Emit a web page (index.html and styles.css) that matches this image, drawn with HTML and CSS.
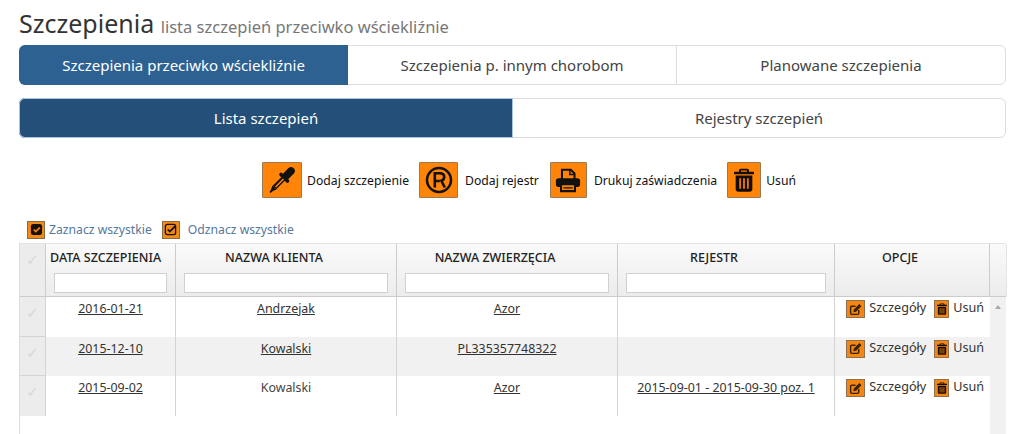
FILE: index.html
```html
<!DOCTYPE html>
<html lang="pl">
<head>
<meta charset="utf-8">
<title>Szczepienia</title>
<link rel="stylesheet" href="styles.css">
</head>
<body>
<svg class="defs" width="0" height="0" aria-hidden="true">
  <symbol id="i-trash" viewBox="0 0 24 28">
    <path d="M8 .5h8c1 0 2 1 2 2V4h5c.6 0 1 .4 1 1v2H0V5c0-.6.4-1 1-1h5V2.500c0-1 1-2 2-2zM8.500 2.500V4h7V2.500zM2 8.500h20V25c0 1.700-1.300 3-3 3H5c-1.700 0-3-1.300-3-3zM6.400 12v12.500h1.900V12zM11 12v12.500h2V12zM15.700 12v12.500h1.900V12z" fill="#160c00" fill-rule="evenodd"/>
  </symbol>
  <symbol id="i-edit" viewBox="0 0 24 24">
    <path d="M18 13v6a2 2 0 0 1-2 2H5a2 2 0 0 1-2-2V8a2 2 0 0 1 2-2h7" fill="none" stroke="#3a2208" stroke-width="2.600"/>
    <path d="M9 12 19 2l4 4-10 10-5 1z" fill="#3a2208"/>
  </symbol>
</svg>
<main class="page">
  <h1 class="title">Szczepienia <small>lista szczepień przeciwko wściekliźnie</small></h1>

  <nav class="tabs tabs-main">
    <a class="tab active">Szczepienia przeciwko wściekliźnie</a>
    <a class="tab">Szczepienia p. innym chorobom</a>
    <a class="tab">Planowane szczepienia</a>
  </nav>

  <nav class="tabs tabs-sub">
    <a class="tab active">Lista szczepień</a>
    <a class="tab">Rejestry szczepień</a>
  </nav>

  <div class="toolbar">
    <a class="action">
      <span class="ico ico-drop"><svg viewBox="0 0 28 28" width="28" height="28">
        <path d="M17.500 10.500 23 5" stroke="#111" stroke-width="7.500" stroke-linecap="round" fill="none"/>
        <path d="M13 8.500 19.500 15" stroke="#111" stroke-width="3.600" stroke-linecap="round" fill="none"/>
        <path d="M15.500 12.500 6.500 21.500" stroke="#111" stroke-width="5" fill="none"/>
        <path d="M15.500 13 7.500 21" stroke="#ff8408" stroke-width="1.600" fill="none"/>
        <path d="M4.500 19.500 8.500 23.500 5 25 2.500 27 1.500 26 3 23.500z" fill="#111"/>
      </svg></span>
      Dodaj szczepienie
    </a>
    <a class="action">
      <span class="ico ico-reg"><svg viewBox="0 0 28 28" width="28" height="28"><circle cx="14" cy="14" r="12" fill="none" stroke="#111" stroke-width="2.500"/><path d="M9.800 21.500V7.300h5c2.800 0 4.400 1.500 4.400 3.800 0 2-1.200 3.200-2.800 3.700l3.400 6.700M9.800 15h5" fill="none" stroke="#111" stroke-width="2.600"/></svg></span>
      Dodaj rejestr
    </a>
    <a class="action action-print">
      <span class="ico ico-print"><svg viewBox="0 0 28 28" width="26" height="26">
        <path d="M7.500 13V3h9.500l4 4v6" fill="none" stroke="#111" stroke-width="2.200"/>
        <path d="M16 3v5h5" fill="none" stroke="#111" stroke-width="1.600"/>
        <rect x="1" y="12" width="26" height="9.500" rx="2.800" fill="#111"/>
        <path d="M6.500 18.500h15V26h-15z" fill="#ff8408" stroke="#111" stroke-width="2.200"/>
        <path d="M9 22.500h10" stroke="#111" stroke-width="1.400"/>
      </svg></span>
      Drukuj zaświadczenia
    </a>
    <a class="action">
      <span class="ico ico-trash"><svg width="20" height="24"><use href="#i-trash"/></svg></span>
      Usuń
    </a>
  </div>

  <div class="select-row">
    <a class="select-link">
      <span class="chk"><svg viewBox="0 0 14 14" width="13" height="13"><rect x="1" y="1" width="12" height="12" rx="2.500" fill="#1a1005"/><path d="M4 7l2.200 2.200L10.500 5" fill="none" stroke="#f08a1a" stroke-width="1.800"/></svg></span>
      Zaznacz wszystkie
    </a>
    <a class="select-link">
      <span class="chk"><svg viewBox="0 0 14 14" width="13" height="13"><rect x="1.500" y="1.500" width="11" height="11" rx="2" fill="none" stroke="#1a1005" stroke-width="1.400"/><path d="M4 7l2.200 2.200L12 3.500" fill="none" stroke="#1a1005" stroke-width="1.900"/></svg></span>
      Odznacz wszystkie
    </a>
  </div>

  <section class="grid">
    <div class="row head">
      <div class="cell cb"><span class="tick">✓</span></div>
      <div class="cell"><span class="h">DATA SZCZEPIENIA</span><input class="filter" aria-label="Data"></div>
      <div class="cell"><span class="h">NAZWA KLIENTA</span><input class="filter" aria-label="Klient"></div>
      <div class="cell"><span class="h">NAZWA ZWIERZĘCIA</span><input class="filter" aria-label="Zwierzę"></div>
      <div class="cell"><span class="h">REJESTR</span><input class="filter" aria-label="Rejestr"></div>
      <div class="cell"><span class="h">OPCJE</span></div>
      <div class="cell sb-head"></div>
    </div>
    <div class="body">
      <div class="rows">
        <div class="row item">
          <div class="cell cb"><span class="tick">✓</span></div>
          <div class="cell"><a class="lnk">2016-01-21</a></div>
          <div class="cell"><a class="lnk">Andrzejak</a></div>
          <div class="cell"><a class="lnk">Azor</a></div>
          <div class="cell"></div>
          <div class="cell opts">
            <a class="opt"><span class="mini wide"><svg width="13" height="13"><use href="#i-edit"/></svg></span>Szczegóły</a>
            <a class="opt"><span class="mini"><svg width="10" height="12"><use href="#i-trash"/></svg></span>Usuń</a>
          </div>
        </div>
        <div class="row item alt">
          <div class="cell cb"><span class="tick">✓</span></div>
          <div class="cell"><a class="lnk">2015-12-10</a></div>
          <div class="cell"><a class="lnk">Kowalski</a></div>
          <div class="cell"><a class="lnk">PL335357748322</a></div>
          <div class="cell"></div>
          <div class="cell opts">
            <a class="opt"><span class="mini wide"><svg width="13" height="13"><use href="#i-edit"/></svg></span>Szczegóły</a>
            <a class="opt"><span class="mini"><svg width="10" height="12"><use href="#i-trash"/></svg></span>Usuń</a>
          </div>
        </div>
        <div class="row item">
          <div class="cell cb"><span class="tick">✓</span></div>
          <div class="cell"><a class="lnk">2015-09-02</a></div>
          <div class="cell">Kowalski</div>
          <div class="cell"><a class="lnk">Azor</a></div>
          <div class="cell"><a class="lnk">2015-09-01 - 2015-09-30 poz. 1</a></div>
          <div class="cell opts">
            <a class="opt"><span class="mini wide"><svg width="13" height="13"><use href="#i-edit"/></svg></span>Szczegóły</a>
            <a class="opt"><span class="mini"><svg width="10" height="12"><use href="#i-trash"/></svg></span>Usuń</a>
          </div>
        </div>
      </div>
      <div class="scrollbar"><span class="arrow"></span></div>
    </div>
  </section>
</main>
</body>
</html>
```

FILE: styles.css
```css
* { box-sizing: border-box; }
html, body { margin: 0; height: 100%; overflow: hidden; background: #fff; }
body { font-family: "Noto Sans", "Open Sans", sans-serif; color: #333; }
.defs { position: absolute; }
.page { padding: 8px 18px 0 19px; display: flex; flex-direction: column; height: 434px; }

.title { margin: 0; height: 37px; font-size: 25px; font-weight: 400; line-height: 30px; color: #333; white-space: nowrap; }
.title small { font-size: 16.500px; color: #777; }

.tabs { display: flex; height: 40px; border: 1px solid #ddd; border-radius: 6px; }
.tab { flex: 1 1 0; display: flex; align-items: center; justify-content: center; font-size: 15px; color: #444; border-right: 1px solid #ddd; }
.tab:last-child { border-right: 0; }
.tabs-main .tab.active { flex: 0 0 329px; margin: -1px 0 -1px -1px; background: #2d6192; color: #fff; border: 0; border-radius: 6px 0 0 6px; }
.tabs-main .tab:nth-child(2) { flex: 0 0 329px; }
.tabs-sub { margin-top: 13px; }
.tabs-sub .tab.active { flex: 0 0 494px; margin: -1px 0 -1px -1px; background: #234f78; color: #fff; border: 0; border-radius: 6px 0 0 6px; box-shadow: 0 0 0 1px #a9c4e4 inset; }
.tabs-sub .tab { border-right: 0; }

.toolbar { display: flex; justify-content: center; gap: 10px; margin-top: 24px; height: 36px; padding-left: 33px; }
.action { display: flex; align-items: center; font-size: 12.200px; color: #111; white-space: nowrap; }
.action-print { margin-left: 1px; }
.ico { display: flex; align-items: center; justify-content: center; height: 36px; background: #ff8408; border: 1px solid #9a7a55; border-radius: 1px; margin-right: 5px; }
.ico-drop { width: 40px; }
.ico-reg { width: 39px; margin-right: 7px; }
.ico-print { width: 37px; margin-right: 7px; }
.ico-trash { width: 34px; }

.select-row { display: flex; gap: 10px; margin-top: 21px; height: 21px; padding-left: 8px; align-items: center; }
.select-link { display: flex; align-items: center; gap: 4px; font-size: 12.200px; color: #54789c; white-space: nowrap; }
.select-link + .select-link { gap: 8px; }
.chk { display: flex; align-items: center; justify-content: center; width: 18px; height: 18px; background: #f08a1a; border: 1px solid #8a6a45; }

.grid { margin-top: 3px; flex: 1; display: flex; flex-direction: column; border-left: 1px solid #ddd; min-height: 0; }
.row { display: grid; grid-template-columns: 26px 130px 221px 221px 217px 155px; }
.head { grid-template-columns: 26px 130px 221px 221px 217px 155px 16px; height: 54px; background: linear-gradient(#fafafa, #ececec); border-top: 1px solid #e4e4e4; border-bottom: 1px solid #ccc; }
.head .cell { display: flex; flex-direction: column; align-items: center; padding: 6px 8px 0; border-right: 1px solid #ccc; }
.head .cb { background: #ececec; }
.h { font-size: 12.500px; line-height: 15px; font-weight: 500; color: #222; white-space: nowrap; height: 23px; margin-right: 24px; }
.head .cell:nth-child(2) .h { align-self: flex-start; margin: 0 0 0 -4px; }
.filter { display: block; width: 100%; height: 20px; border: 1px solid #d0d0d0; background: #fff; padding: 0; }
.sb-head { border-right: 1px solid #e4e4e4 !important; }

.body { flex: 1; display: flex; min-height: 0; }
.rows { width: 970px; }
.scrollbar { width: 16px; background: #f1f1f1; display: flex; justify-content: center; align-items: flex-start; padding-top: 8px; }
.arrow { width: 0; height: 0; border: 3.500px solid transparent; border-top: 0; border-bottom: 4px solid #a8a8a8; }

.item { height: 39.500px; background: #fff; }
.item.alt { background: #f1f1f1; }
.item .cell { text-align: center; font-size: 12.400px; line-height: 16px; padding-top: 4px; color: #444; border-right: 1px solid #d4d4d4; white-space: nowrap; }
.item .cell.opts { border-right: 0; display: flex; justify-content: flex-end; gap: 8px; padding: 1px 6px 0 0; font-size: 12.600px; }
.item .cb, .item.alt .cb { background: #ececec; border-bottom: 1px solid #d4d4d4; }
.item:last-child .cb { border-bottom: 0; }
.lnk { color: #333; text-decoration: underline; }
.tick { font-family: "DejaVu Sans", sans-serif; font-size: 15px; line-height: 18px; color: #d8d8d8; display: block; text-align: center; margin-top: 1px; }
.cb { padding: 6px 0 0 !important; }
.opt { display: flex; color: #333; align-items: flex-start; padding-top: 2px; }
.mini { display: flex; align-items: center; justify-content: center; width: 15px; height: 18px; margin-right: 4px; background: #f58612; border: 1px solid #90704d; }
.mini.wide { width: 19px; }
```
